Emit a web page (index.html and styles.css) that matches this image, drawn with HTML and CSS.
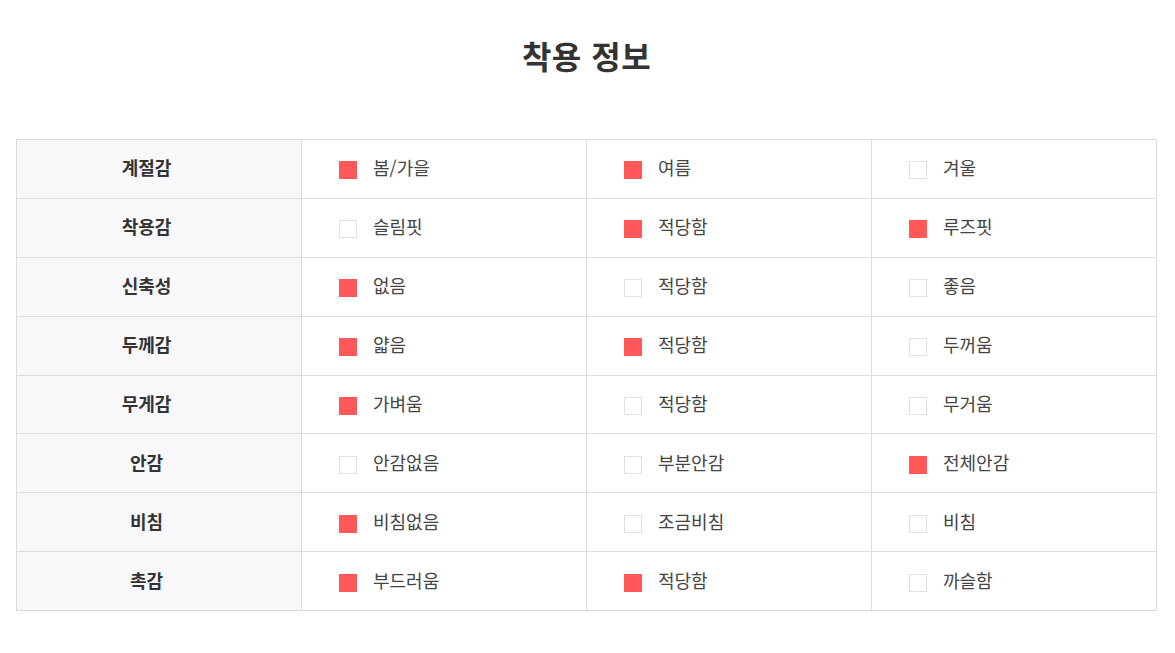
FILE: index.html
```html
<!DOCTYPE html>
<html lang="ko">
<head>
<meta charset="utf-8">
<link rel="stylesheet" href="styles.css">
</head>
<body>
<section class="fit">
  <h2 class="fit-title">착용 정보</h2>
  <table class="fit-table">
    <colgroup><col class="c1"><col class="c2"><col class="c2"><col class="c2"></colgroup>
    <tbody>
      <tr><th>계절감</th><td><span class="box on"></span>봄/가을</td><td><span class="box on"></span>여름</td><td><span class="box"></span>겨울</td></tr>
      <tr><th>착용감</th><td><span class="box"></span>슬림핏</td><td><span class="box on"></span>적당함</td><td><span class="box on"></span>루즈핏</td></tr>
      <tr><th>신축성</th><td><span class="box on"></span>없음</td><td><span class="box"></span>적당함</td><td><span class="box"></span>좋음</td></tr>
      <tr><th>두께감</th><td><span class="box on"></span>얇음</td><td><span class="box on"></span>적당함</td><td><span class="box"></span>두꺼움</td></tr>
      <tr><th>무게감</th><td><span class="box on"></span>가벼움</td><td><span class="box"></span>적당함</td><td><span class="box"></span>무거움</td></tr>
      <tr><th>안감</th><td><span class="box"></span>안감없음</td><td><span class="box"></span>부분안감</td><td><span class="box on"></span>전체안감</td></tr>
      <tr><th>비침</th><td><span class="box on"></span>비침없음</td><td><span class="box"></span>조금비침</td><td><span class="box"></span>비침</td></tr>
      <tr><th>촉감</th><td><span class="box on"></span>부드러움</td><td><span class="box on"></span>적당함</td><td><span class="box"></span>까슬함</td></tr>
    </tbody>
  </table>
</section>
</body>
</html>
```

FILE: styles.css
```css
* { box-sizing: border-box; }
html, body { margin: 0; padding: 0; background: #fff; }
body {
  font-family: "Noto Sans CJK KR", "Noto Sans", sans-serif;
  color: #333;
}
.fit { padding: 34px 18px 0 16px; }
.fit-title {
  margin: 0 0 63px;
  text-align: center;
  font-size: 32px;
  line-height: 42px;
  font-weight: 700;
  color: #333;
  letter-spacing: 0.5px;
}
.fit-table {
  width: 1141px;
  border-collapse: collapse;
  table-layout: fixed;
}
.fit-table .c1, .fit-table .c2 { width: 285px; }
.fit-table th, .fit-table td {
  border: 1px solid #dcdcdc;
  height: 58.875px;
  padding: 0 0 3px;
  font-size: 18px;
  line-height: 24px;
  vertical-align: middle;
}
.fit-table th {
  background: #f8f8fa;
  font-weight: 700;
  color: #333;
  text-align: center;
  padding-right: 25px;
}
.fit-table td {
  padding-left: 37px;
  color: #444;
  font-weight: 400;
}
.box {
  display: inline-block;
  width: 18px;
  height: 18px;
  border: 1px solid #e0e0e0;
  background: #fff;
  margin-right: 16px;
  vertical-align: -4px;
}
.box.on {
  background: #ff5858;
  border-color: #ff5858;
}
```
